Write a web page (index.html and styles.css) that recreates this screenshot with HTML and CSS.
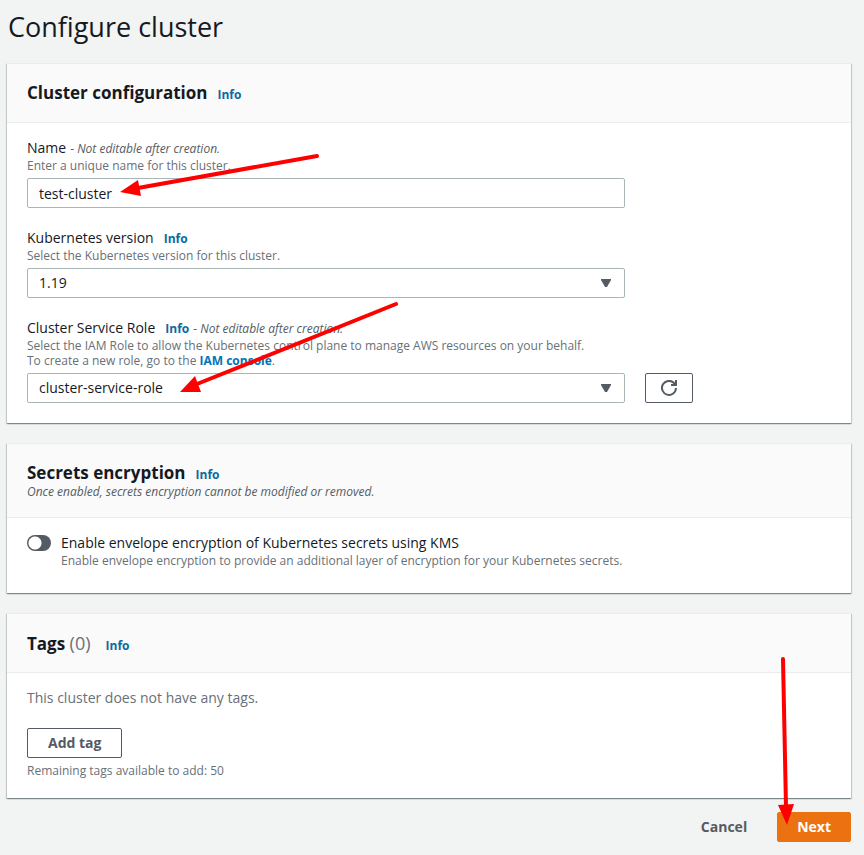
FILE: index.html
```html
<!DOCTYPE html>
<html lang="en">
<head>
<meta charset="utf-8">
<meta name="viewport" content="width=device-width, initial-scale=1">
<title>Configure cluster</title>
<link rel="stylesheet" href="styles.css">
</head>
<body>
<main class="page">
  <h1 class="page-title">Configure cluster</h1>
  <form class="form">
    <section class="card">
      <header class="card-header">
        <div class="heading"><h2 class="card-title">Cluster configuration</h2><a class="info" href="#">Info</a></div>
      </header>
      <div class="card-body fields">
        <div class="field">
          <div class="label-row"><label for="name">Name</label><span class="note">- <em>Not editable after creation.</em></span></div>
          <p class="hint">Enter a unique name for this cluster.</p>
          <div class="control"><input class="box" id="name" type="text" value="test-cluster"></div>
        </div>
        <div class="field">
          <div class="label-row"><label for="version">Kubernetes version</label><a class="info" href="#">Info</a></div>
          <p class="hint">Select the Kubernetes version for this cluster.</p>
          <div class="control">
            <select class="box" id="version"><option>1.19</option></select>
            <svg class="caret" viewBox="0 0 10 8" aria-hidden="true"><path d="M0 0h10v1L6 8H4L0 1z"/></svg>
          </div>
        </div>
        <div class="field">
          <div class="label-row"><label for="role">Cluster Service Role</label><a class="info" href="#">Info</a><span class="note">- <em>Not editable after creation.</em></span></div>
          <p class="hint">Select the IAM Role to allow the Kubernetes control plane to manage AWS resources on your behalf.</p>
          <p class="hint">To create a new role, go to the <a class="link" href="#">IAM console</a>.</p>
          <div class="control-row">
            <div class="control">
              <select class="box" id="role"><option>cluster-service-role</option></select>
              <svg class="caret" viewBox="0 0 10 8" aria-hidden="true"><path d="M0 0h10v1L6 8H4L0 1z"/></svg>
            </div>
            <button class="button refresh" type="button" aria-label="Refresh roles">
              <svg viewBox="0 0 16 16" aria-hidden="true"><path d="M10 5h5V0M15 8a7 7 0 1 1-2-5l2 2"/></svg>
            </button>
          </div>
        </div>
      </div>
    </section>

    <section class="card">
      <header class="card-header">
        <div class="heading"><h2 class="card-title">Secrets encryption</h2><a class="info" href="#">Info</a></div>
        <p class="hint header-note">Once enabled, secrets encryption cannot be modified or removed.</p>
      </header>
      <div class="card-body toggle-body">
        <input class="toggle" id="kms" type="checkbox" role="switch">
        <div>
          <label class="toggle-label" for="kms">Enable envelope encryption of Kubernetes secrets using KMS</label>
          <p class="hint">Enable envelope encryption to provide an additional layer of encryption for your Kubernetes secrets.</p>
        </div>
      </div>
    </section>

    <section class="card">
      <header class="card-header">
        <div class="heading"><h2 class="card-title">Tags <span class="count">(0)</span></h2><a class="info tags-info" href="#">Info</a></div>
      </header>
      <div class="card-body">
        <p class="empty">This cluster does not have any tags.</p>
        <button class="button" type="button">Add tag</button>
        <p class="hint remaining">Remaining tags available to add: 50</p>
      </div>
    </section>

    <footer class="actions">
      <button class="button plain" type="button">Cancel</button>
      <button class="button primary" type="submit">Next</button>
    </footer>
  </form>
  <svg class="arrows" width="864" height="855" viewBox="0 0 864 855" aria-hidden="true">
    <path class="shaft" d="M317 156 138 188M396 304 197 384M783 659l3 148"/>
    <path class="head" d="M120 192 138 180 141 196zM180 392 195 376 201 392zM787 825 778 805 794 804z"/>
  </svg>
</main>
</body>
</html>
```

FILE: styles.css
```css
* { box-sizing: border-box; }

body {
  margin: 0;
  background: #f2f3f3;
  color: #16191f;
  font: 14px/20px "Open Sans", "Noto Sans", sans-serif;
}

h1, h2, p { margin: 0; }

.page {
  position: relative;
  padding: 9px 13px 12px 7px;
}

.page-title {
  padding-left: 1px;
  margin-bottom: 18px;
  font-size: 27px;
  font-weight: 400;
  line-height: 36px;
}

.form {
  display: flex;
  flex-direction: column;
  gap: 20px;
}

.card {
  background: #fff;
  border-top: 1px solid #eaeded;
  box-shadow: 0 1px 1px #001c244d, 1px 1px 1px #001c2426, -1px 1px 1px #001c2426;
}

.card-header {
  padding: 18px 20px;
  background: #fafafa;
  border-bottom: 1px solid #eaeded;
}

.card-body { padding: 15px 20px 20px; }

.heading, .label-row {
  display: flex;
  align-items: baseline;
}

.heading { gap: 10px; height: 22px; }

.card-title {
  font-size: 17px;
  font-weight: 700;
  line-height: 22px;
}

.count { color: #687078; font-size: 18px; font-weight: 400; }
.tags-info { margin-left: 5px; }

.info, .link {
  color: #0073bb;
  font-size: 12px;
  font-weight: 700;
  line-height: 15px;
  text-decoration: none;
}

.info { color: #0a6aa1; }

.fields {
  display: flex;
  flex-direction: column;
  gap: 20px;
}

.label-row { height: 20px; }
.label-row .info { margin-left: 10px; }

.note {
  margin-left: 4px;
  color: #545b64;
  font-size: 12px;
}

.hint {
  color: #687078;
  font-size: 12px;
  line-height: 15px;
}

.header-note { color: #545b64; font-style: italic; }

.control {
  position: relative;
  flex: 0 1 598px;
  max-width: 598px;
}

.control, .control-row { margin-top: 5px; }
.control-row .control { margin-top: 0; }

.control-row {
  display: flex;
  gap: 20px;
}

.box {
  display: block;
  width: 100%;
  height: 30px;
  padding: 0 11px;
  border: 1px solid #aab7b8;
  border-radius: 2px;
  background: #fff;
  color: #16191f;
  font: inherit;
  appearance: none;
}

.caret {
  position: absolute;
  top: 11px;
  right: 14px;
  width: 10px;
  height: 8px;
  fill: #545b64;
  pointer-events: none;
}

.button {
  height: 30px;
  padding: 0 20px;
  border: 1px solid #545b64;
  border-radius: 2px;
  background: #fff;
  color: #545b64;
  font: inherit;
  font-weight: 700;
}

.refresh {
  display: flex;
  align-items: center;
  justify-content: center;
  width: 48px;
  padding: 0;
}

.refresh svg {
  width: 16px;
  height: 16px;
  fill: none;
  stroke: #545b64;
  stroke-width: 2;
}

.toggle-body {
  display: flex;
  gap: 10px;
  padding-bottom: 25px;
}

.toggle {
  flex: none;
  width: 24px;
  height: 16px;
  margin: 2px 0;
  border-radius: 8px;
  appearance: none;
  background: radial-gradient(circle at 8px 8px, #fff 6px, #545b64 7px);
}

.toggle-label { display: block; }

.empty { margin-bottom: 20px; color: #687078; }
.remaining { margin-top: 5px; }

.actions {
  display: flex;
  justify-content: flex-end;
  gap: 10px;
  margin-top: -6px;
}

.actions .button { padding: 0 19px; }

.plain { border-color: transparent; background: transparent; }

.primary {
  border-color: #ec7211;
  background: #ec7211;
  color: #fff;
}

.arrows {
  position: absolute;
  top: 0;
  left: 0;
  pointer-events: none;
}

.shaft {
  fill: none;
  stroke: #f00;
  stroke-width: 4;
  stroke-linecap: round;
}

.head { fill: #f00; }
```
